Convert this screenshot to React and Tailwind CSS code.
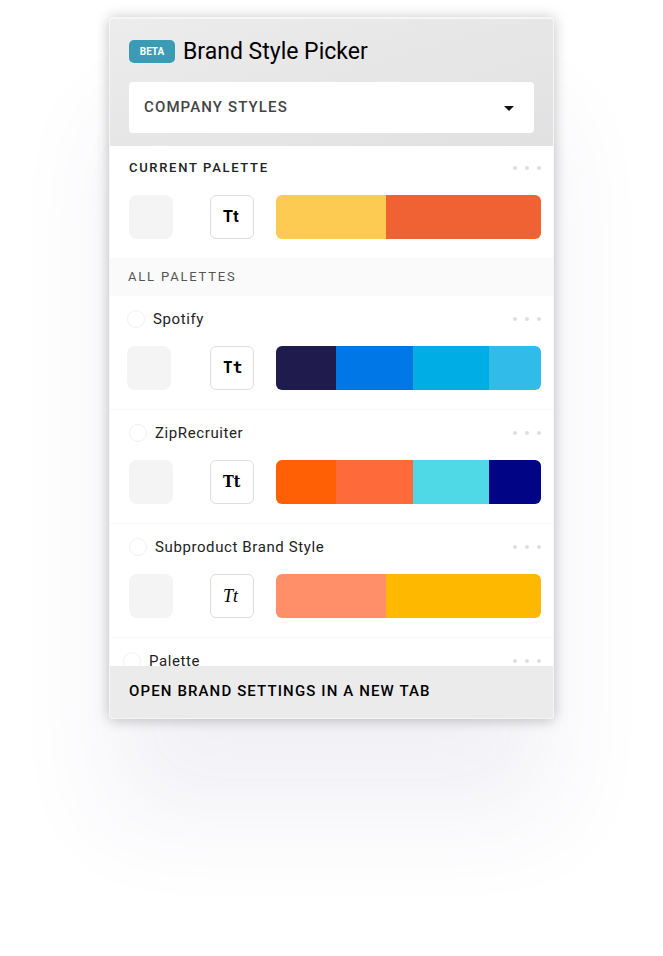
import React from "react";

const palettes = [
  {
    name: "Spotify",
    inset: "pl-[17px]",
    gap: "ml-[39px]",
    font: "font-['DejaVu_Sans_Mono',monospace] text-base font-bold",
    colors: ["grow-[60] bg-[#1f1c4d]", "grow-[77] bg-[#0077e6]", "grow-[76] bg-[#00ade4]", "grow-[52] bg-[#31bbe9]"],
  },
  {
    name: "ZipRecruiter",
    inset: "pl-[19px]",
    gap: "ml-[37px]",
    font: "font-['DejaVu_Serif_Condensed','DejaVu_Serif',serif] text-base font-bold",
    colors: ["grow-[60] bg-[#ff5f05]", "grow-[77] bg-[#ff6a3a]", "grow-[76] bg-[#4fd8e5]", "grow-[52] bg-[#000485]"],
  },
  {
    name: "Subproduct Brand Style",
    inset: "pl-[19px]",
    gap: "ml-[37px]",
    font: "font-['Liberation_Serif',serif] text-lg italic",
    colors: ["grow-[110] bg-[#ff8f68]", "grow-[155] bg-[#ffb800]"],
  },
  { name: "Palette", inset: "pl-[13px]" },
];

function MoreButton({ label }) {
  return (
    <button type="button" aria-label={label} className="flex h-6 items-center gap-2">
      <span className="size-1 rounded-full bg-[#dedede]" />
      <span className="size-1 rounded-full bg-[#dedede]" />
      <span className="size-1 rounded-full bg-[#dedede]" />
    </button>
  );
}

function Swatches({ name, gap, font, colors }) {
  return (
    <div className="mt-[15px] flex">
      <div className="size-11 shrink-0 rounded-lg bg-[#f4f4f4]" />
      <button
        type="button"
        aria-label={`Fonts of ${name}`}
        className={`mr-[22px] flex size-11 shrink-0 items-center rounded-md border border-[#dedede] pl-3 text-black ${gap}`}
      >
        <span className={font}>Tt</span>
      </button>
      <div className="flex h-11 flex-1 overflow-hidden rounded-md">
        {colors.map((color) => (
          <div key={color} className={`basis-0 ${color}`} />
        ))}
      </div>
    </div>
  );
}

export default function App() {
  return (
    <div className="min-h-screen bg-white px-4 pt-[17px] pb-60 font-[Roboto,sans-serif]">
      <main className="mx-auto max-w-[445px] overflow-hidden rounded border border-t-2 border-[#f6f6f6] bg-white shadow-[0_1px_14px_rgba(0,0,0,0.25),0_100px_100px_rgba(70,50,130,0.07)]">
        <header className="bg-linear-to-br from-[#ececec] to-[#e1e1e1] px-[19px] pt-4 pb-[13px]">
          <div className="flex h-8 items-center gap-2">
            <span className="flex h-[23px] w-[46px] items-center justify-center rounded-[5px] bg-[#3b9bb5] text-[10px] font-bold text-white">
              BETA
            </span>
            <h1 className="pt-0.5 text-[23px] leading-8 text-black">Brand Style Picker</h1>
          </div>
          <div className="relative mt-[15px]">
            <select
              aria-label="Style collection"
              className="h-[51px] w-full appearance-none rounded bg-white px-[15px] text-[15px] font-medium tracking-[0.075em] text-[#444]"
            >
              <option>COMPANY STYLES</option>
            </select>
            <svg
              viewBox="0 0 10 5"
              aria-hidden="true"
              className="pointer-events-none absolute top-6 right-5 h-[5px] w-2.5 fill-[#111]"
            >
              <path d="M0 0h10L5 5z" />
            </svg>
          </div>
        </header>

        <section className="pt-2.5 pr-3 pb-[19px] pl-[19px]">
          <div className="flex items-center justify-between">
            <h2 className="text-[13px] leading-6 font-medium tracking-[0.13em] text-[#222]">CURRENT PALETTE</h2>
            <MoreButton label="Current palette options" />
          </div>
          <Swatches
            name="current palette"
            gap="ml-[37px]"
            font="text-base font-bold tracking-wide"
            colors={["grow-[110] bg-[#fdcb52]", "grow-[155] bg-[#f06234]"]}
          />
        </section>

        <h2 className="bg-[#fafafa] pl-[18px] text-[13px] leading-[38px] tracking-[0.14em] text-[#555]">
          ALL PALETTES
        </h2>

        <ul className="h-[370px] overflow-hidden">
          {palettes.map(({ name, inset, gap, font, colors }) => (
            <li key={name} className={`border-b border-[#f8f8f8] pt-[11px] pr-3 pb-[19px] ${inset}`}>
              <div className="flex items-center justify-between">
                <label className="flex items-center gap-2 text-[15px] leading-6 tracking-[0.04em] text-[#222]">
                  <input
                    type="radio"
                    name="palette"
                    className="size-[18px] appearance-none rounded-full border border-[#f1f1f1] bg-white checked:bg-[#3b9bb5]"
                  />
                  {name}
                </label>
                <MoreButton label={`${name} options`} />
              </div>
              {colors && <Swatches name={name} gap={gap} font={font} colors={colors} />}
            </li>
          ))}
        </ul>

        <footer className="bg-[#ebebeb]">
          <a href="#settings" className="block px-[19px] pt-[13px] pb-[15px] text-[15px] leading-6 font-medium tracking-[0.075em] text-black">
            OPEN BRAND SETTINGS IN A NEW TAB
          </a>
        </footer>
      </main>
    </div>
  );
}
